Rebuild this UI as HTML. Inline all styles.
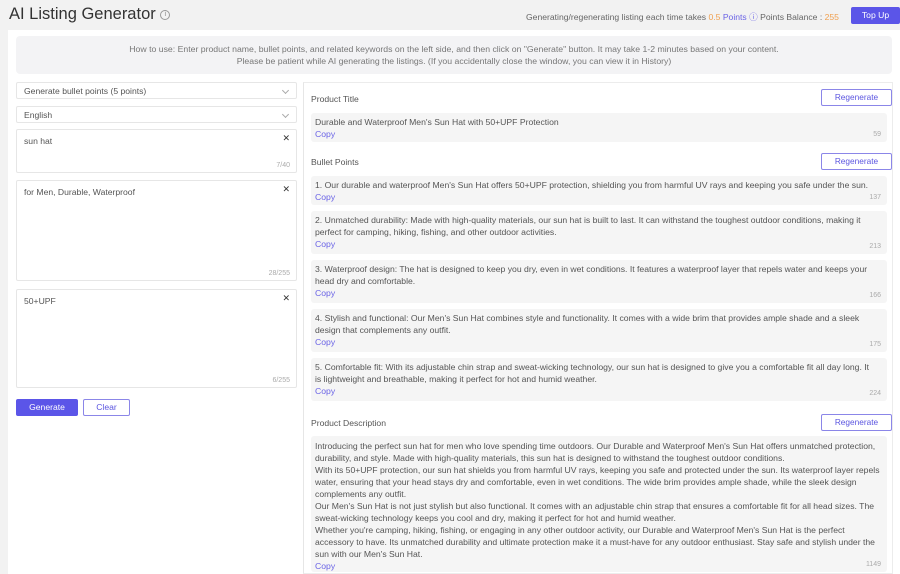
<!DOCTYPE html>
<html><head><meta charset="utf-8"><style>
*{box-sizing:border-box;margin:0;padding:0}
body{width:900px;height:574px;background:#f2f2f2;font-family:"Liberation Sans",sans-serif;color:#444;position:relative;overflow:hidden;font-size:8.6px}
.a{position:absolute}
.panel{left:8px;top:30px;width:892px;height:544px;background:#fff}
.info{left:16px;top:36px;width:876px;height:38px;background:#f3f3f5;border-radius:4px;text-align:center;color:#777;line-height:12px;padding-top:7px;font-size:8.7px}
.sel{left:16px;width:281px;height:17px;border:1px solid #e6e6e6;border-radius:2px;padding:3px 7px;color:#555}
.sel:after{content:"";position:absolute;right:8px;top:5px;width:4px;height:4px;border-right:1px solid #aaa;border-bottom:1px solid #aaa;transform:rotate(45deg)}
.ta{left:16px;width:281px;border:1px solid #e6e6e6;border-radius:2px;padding:6px 7px;color:#555}
.ta .x{position:absolute;right:6px;top:3px;font-size:9px;color:#333}
.ta .c{position:absolute;right:6px;bottom:3px;font-size:7px;color:#aaa}
.btn{height:17px;border-radius:2px;text-align:center;line-height:15px}
.right{left:303px;top:82px;width:590px;height:492px;border:1px solid #ececec;border-left:1px solid #e6e6e6}
.lbl{left:311px;color:#555;font-size:8.6px}
.reg{left:821px;width:71px;height:17px;border:1px solid #8b86e8;border-radius:2px;color:#5b55e0;text-align:center;line-height:15px;font-size:8.3px}
.box{left:311px;width:576px;background:#f5f5f5;border-radius:3px;padding:3px 4px;line-height:12px;color:#555;font-size:8.65px}
.box .cp{color:#6a63e6}
.box .n{position:absolute;right:6px;bottom:3px;font-size:7px;color:#aaa;line-height:8px}
</style></head><body>
<div class="a" style="left:9px;top:5px;font-size:16.5px;color:#333">AI Listing Generator <span style="color:#888;display:inline-block;border:1px solid #999;border-radius:50%;width:10px;height:10px;line-height:8px;text-align:center;font-size:7px;vertical-align:3px">i</span></div>
<div class="a" style="left:526px;top:11px;color:#666;font-size:8.6px">Generating/regenerating listing each time takes <span style="color:#f0a050">0.5</span> <span style="color:#6a63e6">Points</span> <span style="color:#6a63e6">&#9432;</span> Points Balance : <span style="color:#f0a050">255</span></div>
<div class="a btn" style="left:851px;top:7px;width:49px;height:17px;background:#5b55e8;color:#fff;line-height:17px">Top Up</div>
<div class="a panel"></div>
<div class="a info">How to use: Enter product name, bullet points, and related keywords on the left side, and then click on "Generate" button. It may take 1-2 minutes based on your content.<br>Please be patient while AI generating the listings. (If you accidentally close the window, you can view it in History)</div>
<div class="a sel" style="top:82px">Generate bullet points (5 points)</div>
<div class="a sel" style="top:106px">English</div>
<div class="a ta" style="top:129px;height:44px">sun hat<span class="x">✕</span><span class="c">7/40</span></div>
<div class="a ta" style="top:180px;height:101px">for Men, Durable, Waterproof<span class="x">✕</span><span class="c">28/255</span></div>
<div class="a ta" style="top:289px;height:99px">50+UPF<span class="x">✕</span><span class="c">6/255</span></div>
<div class="a btn" style="left:16px;top:399px;width:62px;background:#5b55e8;color:#fff;line-height:17px">Generate</div>
<div class="a btn" style="left:83px;top:399px;width:47px;border:1px solid #8b86e8;color:#5b55e0">Clear</div>
<div class="a right"></div>
<div class="a lbl" style="top:94px">Product Title</div>
<div class="a reg" style="top:89px">Regenerate</div>
<div class="a box" style="top:113px;height:29px">Durable and Waterproof Men's Sun Hat with 50+UPF Protection<br><span class="cp">Copy</span><span class="n">59</span></div>
<div class="a lbl" style="top:157px">Bullet Points</div>
<div class="a reg" style="top:153px">Regenerate</div>
<div class="a box" style="top:176px;height:29px">1. Our durable and waterproof Men's Sun Hat offers 50+UPF protection, shielding you from harmful UV rays and keeping you safe under the sun.<br><span class="cp">Copy</span><span class="n">137</span></div>
<div class="a box" style="top:211px;height:43px">2. Unmatched durability: Made with high-quality materials, our sun hat is built to last. It can withstand the toughest outdoor conditions, making it<br>perfect for camping, hiking, fishing, and other outdoor activities.<br><span class="cp">Copy</span><span class="n">213</span></div>
<div class="a box" style="top:260px;height:43px">3. Waterproof design: The hat is designed to keep you dry, even in wet conditions. It features a waterproof layer that repels water and keeps your<br>head dry and comfortable.<br><span class="cp">Copy</span><span class="n">166</span></div>
<div class="a box" style="top:309px;height:43px">4. Stylish and functional: Our Men's Sun Hat combines style and functionality. It comes with a wide brim that provides ample shade and a sleek<br>design that complements any outfit.<br><span class="cp">Copy</span><span class="n">175</span></div>
<div class="a box" style="top:358px;height:43px">5. Comfortable fit: With its adjustable chin strap and sweat-wicking technology, our sun hat is designed to give you a comfortable fit all day long. It<br>is lightweight and breathable, making it perfect for hot and humid weather.<br><span class="cp">Copy</span><span class="n">224</span></div>
<div class="a lbl" style="top:418px">Product Description</div>
<div class="a reg" style="top:414px">Regenerate</div>
<div class="a box" style="top:436px;height:136px;padding-top:4px">Introducing the perfect sun hat for men who love spending time outdoors. Our Durable and Waterproof Men's Sun Hat offers unmatched protection,<br>durability, and style. Made with high-quality materials, this sun hat is designed to withstand the toughest outdoor conditions.<br>With its 50+UPF protection, our sun hat shields you from harmful UV rays, keeping you safe and protected under the sun. Its waterproof layer repels<br>water, ensuring that your head stays dry and comfortable, even in wet conditions. The wide brim provides ample shade, while the sleek design<br>complements any outfit.<br>Our Men's Sun Hat is not just stylish but also functional. It comes with an adjustable chin strap that ensures a comfortable fit for all head sizes. The<br>sweat-wicking technology keeps you cool and dry, making it perfect for hot and humid weather.<br>Whether you're camping, hiking, fishing, or engaging in any other outdoor activity, our Durable and Waterproof Men's Sun Hat is the perfect<br>accessory to have. Its unmatched durability and ultimate protection make it a must-have for any outdoor enthusiast. Stay safe and stylish under the<br>sun with our Men's Sun Hat.<br><span class="cp">Copy</span><span class="n">1149</span></div>
</body></html>
